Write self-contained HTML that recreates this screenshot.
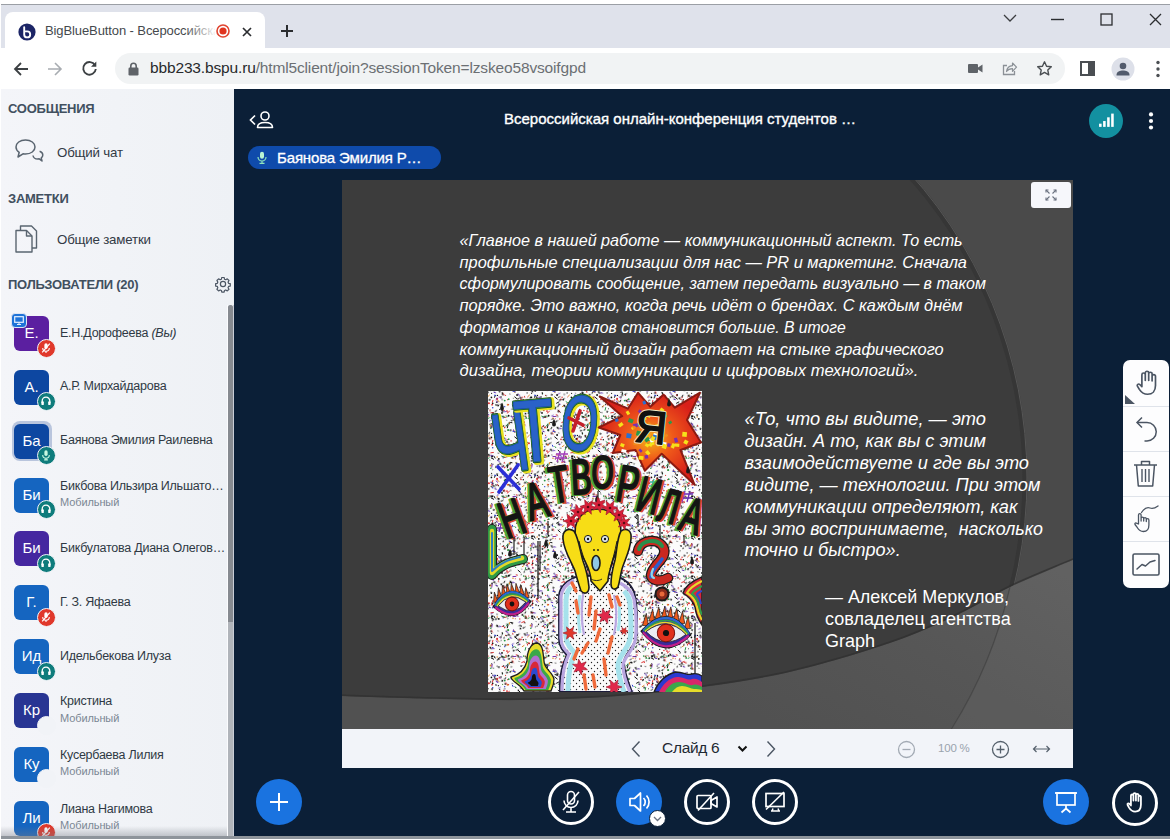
<!DOCTYPE html>
<html lang="ru">
<head>
<meta charset="utf-8">
<title>BigBlueButton - Всероссийская онлайн-конференция студентов</title>
<style>
*{box-sizing:border-box;margin:0;padding:0}
html,body{width:1171px;height:840px;overflow:hidden;background:#fff;font-family:"Liberation Sans",sans-serif;}
.abs{position:absolute}
#frame{position:absolute;left:1px;top:4px;width:1169px;height:834px;background:#dfe2eb;border-top:1px solid #9b9fa5;overflow:hidden}
#bottomline{position:absolute;left:1px;top:835.5px;width:1169px;height:3px;background:#8e949b}
/* chrome */
#tabstrip{position:absolute;left:0;top:0;width:1169px;height:43px;background:#dfe2eb}
#tab{position:absolute;left:4px;top:7px;width:260px;height:36px;background:#fff;border-radius:8px 8px 0 0}
#tabtitle{position:absolute;left:40px;top:11px;width:170px;height:20px;font-size:13px;color:#45494d;white-space:nowrap;overflow:hidden;letter-spacing:-0.1px}
#tabfade{position:absolute;left:180px;top:6px;width:32px;height:24px;background:linear-gradient(90deg,rgba(255,255,255,0),#fff)}
#toolbar{position:absolute;left:0;top:43px;width:1169px;height:41px;background:#fff;z-index:5}
#omni{position:absolute;left:114px;top:5px;width:950px;height:31px;border-radius:16px;background:#f1f3f4}
#url{position:absolute;left:35px;top:6px;font-size:15.5px;color:#6b6f73;white-space:nowrap;letter-spacing:-0.15px}
#url b{font-weight:normal;color:#27292b}
/* app */
#side{position:absolute;left:0;top:83px;width:233px;height:748px;background:linear-gradient(90deg,#f4f5f9 0%,#eef1f5 100%);overflow:hidden}
#main{position:absolute;left:233px;top:83px;width:936px;height:748px;background:#0b1f37}
.h{position:absolute;left:7px;font-size:13px;font-weight:bold;color:#41505f;letter-spacing:-0.25px}
.it{position:absolute;left:56px;font-size:13.3px;color:#323a45;white-space:nowrap;letter-spacing:-0.2px}
.av{position:absolute;left:13px;width:35px;height:35px;border-radius:6px;background:#1565c0;color:#fff;font-size:15px;text-align:center;line-height:33px}
.nm{position:absolute;left:59px;font-size:12.5px;color:#2f3944;white-space:nowrap;letter-spacing:-0.25px}
.sub{position:absolute;left:59px;font-size:11px;color:#7b8794;white-space:nowrap;letter-spacing:-0.1px}
.bd{position:absolute;left:35.8px;width:19px;height:19px;border-radius:50%;border:1.5px solid #f1f3f7}
.bd svg{left:2px !important;top:2px !important;width:12px;height:12px}
</style>
</head>
<body>
<div id="frame">
  <div id="tabstrip">
    <div id="tab">
      <svg class="abs" style="left:13px;top:11px" width="18" height="18" viewBox="0 0 18 18"><circle cx="9" cy="9" r="8.6" fill="#1c2566"/><path d="M6.2 4.2v7.2a3 3 0 1 0 3-3H7.6" fill="none" stroke="#fff" stroke-width="1.9" stroke-linecap="round"/></svg>
      <div id="tabtitle">BigBlueButton - Всероссийская онлайн</div>
      <div id="tabfade"></div>
      <svg class="abs" style="left:211px;top:12px" width="14" height="14" viewBox="0 0 14 14"><circle cx="7" cy="7" r="6" fill="#fff" stroke="#e0442f" stroke-width="1.6"/><circle cx="7" cy="7" r="3.6" fill="#e0341f"/></svg>
      <svg class="abs" style="left:236px;top:14px" width="12" height="12" viewBox="0 0 12 12"><path d="M2 2l8 8M10 2l-8 8" stroke="#2b2d30" stroke-width="1.7"/></svg>
    </div>
    <svg class="abs" style="left:279px;top:19px" width="14" height="14" viewBox="0 0 14 14"><path d="M7 1v12M1 7h12" stroke="#2b2d30" stroke-width="2"/></svg>
    <svg class="abs" style="left:1001px;top:8px" width="16" height="10" viewBox="0 0 16 10"><path d="M2 2l6 6 6-6" fill="none" stroke="#3b3d40" stroke-width="1.3"/></svg>
    <svg class="abs" style="left:1050px;top:13px" width="13" height="3" viewBox="0 0 13 3"><path d="M0 1.5h13" stroke="#2b2d30" stroke-width="1.4"/></svg>
    <svg class="abs" style="left:1099px;top:8px" width="13" height="13" viewBox="0 0 13 13"><rect x="1" y="1" width="11" height="11" fill="none" stroke="#2b2d30" stroke-width="1.3"/></svg>
    <svg class="abs" style="left:1148px;top:8px" width="13" height="13" viewBox="0 0 13 13"><path d="M1 1l11 11M12 1L1 12" stroke="#2b2d30" stroke-width="1.3"/></svg>
  </div>
  <div id="toolbar">
    <svg class="abs" style="left:12px;top:13px" width="16" height="16" viewBox="0 0 16 16"><path d="M15 8H2.5M8 2L2 8l6 6" fill="none" stroke="#3c4043" stroke-width="1.8"/></svg>
    <svg class="abs" style="left:46px;top:13px" width="16" height="16" viewBox="0 0 16 16"><path d="M1 8h12.5M8 2l6 6-6 6" fill="none" stroke="#a8acb1" stroke-width="1.6"/></svg>
    <svg class="abs" style="left:80px;top:12px" width="17" height="17" viewBox="0 0 17 17"><path d="M14 5.2A6.3 6.3 0 1 0 14.8 9" fill="none" stroke="#3c4043" stroke-width="1.9"/><path d="M15.3 1.5v5.3H10z" fill="#3c4043"/></svg>
    <div id="omni">
      <svg class="abs" style="left:13px;top:9px" width="11" height="14" viewBox="0 0 11 14"><rect x="0.5" y="5.5" width="10" height="8" rx="1.2" fill="#5f6368"/><path d="M2.8 6V3.9a2.7 2.7 0 0 1 5.4 0V6" fill="none" stroke="#5f6368" stroke-width="1.6"/></svg>
      <div id="url"><b>bbb233.bspu.ru</b>/html5client/join?sessionToken=lzskeo58vsoifgpd</div>
      <svg class="abs" style="left:853px;top:10px" width="15" height="11" viewBox="0 0 15 11"><rect x="0" y="1" width="10" height="9" rx="1" fill="#5f6368"/><path d="M10 4.5L14.5 1.5v8L10 6.5z" fill="#5f6368"/></svg>
      <svg class="abs" style="left:886px;top:7px" width="17" height="17" viewBox="0 0 17 17"><path d="M6 5.5H2.5v9h11V11" fill="none" stroke="#8b9096" stroke-width="1.3"/><path d="M5.5 11.5c.5-3.5 2.5-5.5 6-5.8V3l4 4.2-4 4.2V8.600c-2.500 0-4.500.8-6 2.900z" fill="none" stroke="#8b9096" stroke-width="1.2" stroke-linejoin="round"/></svg>
      <svg class="abs" style="left:921px;top:7px" width="17" height="17" viewBox="0 0 17 17"><path d="M8.500 1.800l2.050 4.400 4.750.55-3.500 3.300.95 4.750-4.250-2.400-4.250 2.400.95-4.750-3.500-3.300 4.750-.55z" fill="none" stroke="#4a4e52" stroke-width="1.4" stroke-linejoin="round"/></svg>
    </div>
    <svg class="abs" style="left:1079px;top:13px" width="15" height="15" viewBox="0 0 15 15"><rect x="1" y="1" width="13" height="13" fill="none" stroke="#4a4e52" stroke-width="2"/><rect x="8" y="1" width="6" height="13" fill="#4a4e52"/></svg>
    <svg class="abs" style="left:1110px;top:9px" width="24" height="24" viewBox="0 0 24 24"><circle cx="12" cy="12" r="11.500" fill="#dde0e9"/><circle cx="12" cy="9" r="3.300" fill="#525b6c"/><path d="M5.500 17.800c0-3 3.500-4.200 6.500-4.200s6.500 1.200 6.500 4.200v.700h-13z" fill="#525b6c"/></svg>
    <svg class="abs" style="left:1155px;top:12px" width="4" height="18" viewBox="0 0 4 18"><circle cx="2" cy="2.500" r="1.700" fill="#4a4e52"/><circle cx="2" cy="9" r="1.700" fill="#4a4e52"/><circle cx="2" cy="15.500" r="1.700" fill="#4a4e52"/></svg>
  </div>
  <div id="side">
<div class="h" style="top:13px">СООБЩЕНИЯ</div>
<svg class="abs" style="left:13px;top:50px" width="30" height="28" viewBox="0 0 30 28"><path d="M11.500 2C6 2 2 5 2 9c0 2.200 1.200 4 3.200 5.300L4 19l5-3.200c.8.100 1.600.200 2.500.200 5.500 0 9.500-3 9.500-7s-4-7-9.500-7z" fill="none" stroke="#5a6570" stroke-width="1.500" stroke-linejoin="round"/><path d="M19 17.500c.300 2 2.200 3.500 4.800 3.500.5 0 1-.05 1.400-.150L28 23l-.8-3c1-.8 1.600-1.800 1.600-3 0-1.700-1.300-3.100-3.200-3.700" fill="none" stroke="#5a6570" stroke-width="1.500" stroke-linejoin="round"/></svg>
<div class="it" style="top:57px">Общий чат</div>
<div class="h" style="top:102.500px">ЗАМЕТКИ</div>
<svg class="abs" style="left:13px;top:136px" width="26" height="30" viewBox="0 0 26 30"><path d="M6.500 6.500V2h11l5 5v17h-4.500" fill="none" stroke="#5a6570" stroke-width="1.400" stroke-linejoin="round"/><path d="M2 6.500h10.500l5.500 5.500v16H2z" fill="none" stroke="#5a6570" stroke-width="1.400" stroke-linejoin="round"/><path d="M12.500 6.500V12H18" fill="none" stroke="#5a6570" stroke-width="1.400" stroke-linejoin="round"/></svg>
<div class="it" style="top:144px">Общие заметки</div>
<div class="h" style="top:189px">ПОЛЬЗОВАТЕЛИ (20)</div>
<svg class="abs" style="left:213px;top:187px" width="18" height="18" viewBox="0 0 18 18"><path d="M7.600 1.500h2.800l.4 2 1.500.7 1.800-1.100 2 2-1.100 1.800.6 1.500 2 .4v2.800l-2 .4-.6 1.500 1.100 1.800-2 2-1.800-1.100-1.500.6-.4 2H7.600l-.4-2-1.500-.6-1.800 1.100-2-2L3 13.500l-.6-1.500-2-.4V8.800l2-.4L3 6.900 1.900 5.100l2-2 1.800 1.100 1.500-.7z" transform="translate(1.300 1.200) scale(.85)" fill="none" stroke="#4b5563" stroke-width="1.400" stroke-linejoin="round"/><circle cx="9" cy="9" r="2.600" fill="none" stroke="#4b5563" stroke-width="1.200"/></svg>
<div class="abs" style="left:225.500px;top:217px;width:1px;height:531px;background:#fbfcfe"></div><div class="abs" style="left:226.500px;top:217px;width:5px;height:531px;background:#b0b4ba;border-radius:3px 3px 0 0"></div><div class="abs" style="left:231.500px;top:217px;width:1.500px;height:531px;background:#c9cdd6"></div><div class="abs" style="left:226.500px;top:217px;width:5px;height:317px;background:#868a90;border-radius:3px 3px 0 0"></div>
<div class="av" style="top:228.0px;background:#5b1fa0">Е.</div>
<div class="bd" style="top:250.5px;background:#e0382b"><svg class="abs" style="left:1px;top:1px" width="11" height="11" viewBox="0 0 11 11"><rect x="4" y="1.2" width="3" height="5.2" rx="1.500" fill="#fff"/><path d="M2.500 5.500a3 3 0 0 0 6 0M5.500 8.500v1.500" stroke="#fff" stroke-width="1" fill="none"/><path d="M2 9.500L9 1.500" stroke="#fff" stroke-width="1.100"/></svg></div>
<div class="nm" style="top:237.6px">Е.Н.Дорофеева <i>(Вы)</i></div>
<div class="av" style="top:281.87px;background:#0d47a1">А.</div>
<div class="bd" style="top:304.37px;background:#0f7c7c"><svg class="abs" style="left:1px;top:1px" width="11" height="11" viewBox="0 0 11 11"><path d="M2 7.500V5.500a3.500 3.500 0 0 1 7 0v2" stroke="#fff" stroke-width="1.200" fill="none"/><rect x="1.300" y="5.800" width="2.200" height="3.400" rx=".8" fill="#fff"/><rect x="7.500" y="5.800" width="2.200" height="3.400" rx=".8" fill="#fff"/></svg></div>
<div class="nm" style="top:291.47px">А.Р. Мирхайдарова</div>
<div class="abs" style="left:10.500px;top:333.24px;width:40px;height:40px;border-radius:8px;background:#b9c5dd"></div>
<div class="av" style="top:335.74px;background:#0d47a1">Ба</div>
<div class="bd" style="top:358.24px;background:#0f7c7c"><svg class="abs" style="left:1px;top:1px" width="11" height="11" viewBox="0 0 11 11"><rect x="4" y="1.200" width="3" height="5.200" rx="1.500" fill="#c9f7e0"/><path d="M2.500 5.500a3 3 0 0 0 6 0M5.500 8.500v1.500M3.800 10h3.400" stroke="#c9f7e0" stroke-width="1" fill="none"/></svg></div>
<div class="nm" style="top:345.34px">Баянова Эмилия Раилевна</div>
<div class="av" style="top:389.61px;background:#1565c0">Би</div>
<div class="bd" style="top:412.11px;background:#0f7c7c"><svg class="abs" style="left:1px;top:1px" width="11" height="11" viewBox="0 0 11 11"><path d="M2 7.500V5.500a3.500 3.500 0 0 1 7 0v2" stroke="#fff" stroke-width="1.200" fill="none"/><rect x="1.300" y="5.800" width="2.200" height="3.400" rx=".8" fill="#fff"/><rect x="7.500" y="5.800" width="2.200" height="3.400" rx=".8" fill="#fff"/></svg></div>
<div class="nm" style="top:390.61px">Бикбова Ильзира Ильшато…</div>
<div class="sub" style="top:408.11px">Мобильный</div>
<div class="av" style="top:443.48px;background:#4527a0">Би</div>
<div class="bd" style="top:465.98px;background:#0f7c7c"><svg class="abs" style="left:1px;top:1px" width="11" height="11" viewBox="0 0 11 11"><path d="M2 7.500V5.500a3.500 3.500 0 0 1 7 0v2" stroke="#fff" stroke-width="1.200" fill="none"/><rect x="1.300" y="5.800" width="2.200" height="3.400" rx=".8" fill="#fff"/><rect x="7.500" y="5.800" width="2.200" height="3.400" rx=".8" fill="#fff"/></svg></div>
<div class="nm" style="top:453.08px">Бикбулатова Диана Олегов…</div>
<div class="av" style="top:497.35px;background:#1565c0">Г.</div>
<div class="bd" style="top:519.85px;background:#e0382b"><svg class="abs" style="left:1px;top:1px" width="11" height="11" viewBox="0 0 11 11"><rect x="4" y="1.2" width="3" height="5.2" rx="1.500" fill="#fff"/><path d="M2.500 5.500a3 3 0 0 0 6 0M5.500 8.500v1.500" stroke="#fff" stroke-width="1" fill="none"/><path d="M2 9.500L9 1.500" stroke="#fff" stroke-width="1.100"/></svg></div>
<div class="nm" style="top:506.95px">Г. З. Яфаева</div>
<div class="av" style="top:551.22px;background:#1565c0">Ид</div>
<div class="bd" style="top:573.72px;background:#0f7c7c"><svg class="abs" style="left:1px;top:1px" width="11" height="11" viewBox="0 0 11 11"><path d="M2 7.500V5.500a3.500 3.500 0 0 1 7 0v2" stroke="#fff" stroke-width="1.200" fill="none"/><rect x="1.300" y="5.800" width="2.200" height="3.400" rx=".8" fill="#fff"/><rect x="7.500" y="5.800" width="2.200" height="3.400" rx=".8" fill="#fff"/></svg></div>
<div class="nm" style="top:560.82px">Идельбекова Илуза</div>
<div class="av" style="top:605.09px;background:#283593">Кр</div>
<div class="bd" style="top:627.59px;background:#f1f3f7"></div>
<div class="nm" style="top:606.09px">Кристина</div>
<div class="sub" style="top:623.59px">Мобильный</div>
<div class="av" style="top:658.96px;background:#1565c0">Ку</div>
<div class="bd" style="top:681.46px;background:#f1f3f7"></div>
<div class="nm" style="top:659.96px">Кусербаева Лилия</div>
<div class="sub" style="top:677.46px">Мобильный</div>
<div class="av" style="top:712.83px;background:#1565c0">Ли</div>
<div class="bd" style="top:735.33px;background:#e0382b"><svg class="abs" style="left:1px;top:1px" width="11" height="11" viewBox="0 0 11 11"><rect x="4" y="1.2" width="3" height="5.2" rx="1.500" fill="#fff"/><path d="M2.500 5.500a3 3 0 0 0 6 0M5.500 8.500v1.500" stroke="#fff" stroke-width="1" fill="none"/><path d="M2 9.500L9 1.500" stroke="#fff" stroke-width="1.100"/></svg></div>
<div class="nm" style="top:713.83px">Лиана Нагимова</div>
<div class="sub" style="top:731.33px">Мобильный</div>
<div class="abs" style="left:10px;top:225px;width:16px;height:15px;border-radius:4px;background:#1e73d8;border:1.500px solid #dfe6f3"><svg class="abs" style="left:1.500px;top:1.500px" width="10" height="9" viewBox="0 0 10 9"><rect x=".7" y=".7" width="8.600" height="5.600" fill="none" stroke="#e6f0ff" stroke-width="1.200"/><path d="M3 8.500h4M5 6.500v2" stroke="#e6f0ff" stroke-width="1"/></svg></div>
<div class="abs" style="left:0;top:738px;width:226px;height:10px;background:linear-gradient(180deg,rgba(120,125,135,0),rgba(120,125,135,.4))"></div>
</div>
  <div id="main">
<svg class="abs" style="left:14px;top:21px" width="28" height="22" viewBox="0 0 28 22"><path d="M7 6.500L2.500 11 7 15.500" fill="none" stroke="#fff" stroke-width="1.700"/><circle cx="17" cy="7" r="4" fill="none" stroke="#fff" stroke-width="1.600"/><path d="M9.500 18.500c0-3.500 3.500-5 7.500-5s7.500 1.500 7.500 5z" fill="none" stroke="#fff" stroke-width="1.600" stroke-linejoin="round"/></svg>
<div class="abs" id="title" style="left:146px;top:22px;width:600px;text-align:center;color:#fff;font-size:15px;white-space:nowrap;letter-spacing:0px;-webkit-text-stroke:0.35px #fff">Всероссийская онлайн-конференция студентов …</div>
<div class="abs" style="left:855px;top:16px;width:34px;height:34px;border-radius:50%;background:#1390a0"><svg class="abs" style="left:9px;top:7.500px" width="17" height="17" viewBox="0 0 16 16"><rect x="1" y="11" width="2.400" height="3" fill="#fff"/><rect x="4.800" y="8.500" width="2.400" height="5.500" fill="#fff"/><rect x="8.600" y="5" width="2.400" height="9" fill="#fff"/><rect x="12.400" y="1.500" width="2.400" height="12.500" fill="#fff"/></svg></div>
<svg class="abs" style="left:914px;top:23px" width="6" height="20" viewBox="0 0 6 20"><circle cx="3" cy="3.400" r="2.100" fill="#fff"/><circle cx="3" cy="10" r="2.100" fill="#fff"/><circle cx="3" cy="16.500" r="2.100" fill="#fff"/></svg>
<div class="abs" style="left:14px;top:58px;width:193px;height:23px;border-radius:12px;background:#0f4bab"></div>
<svg class="abs" style="left:22px;top:63px" width="12" height="13" viewBox="0 0 12 13"><rect x="4" y=".8" width="4" height="7" rx="2" fill="#b9f5d4"/><path d="M2 6a4 4 0 0 0 8 0M6 10v2M3.500 12.300h5" stroke="#8fe6bd" stroke-width="1.200" fill="none"/></svg>
<div class="abs" style="left:43px;top:61px;color:#fff;font-size:15px;white-space:nowrap;letter-spacing:-0.15px;-webkit-text-stroke:0.3px #fff">Баянова Эмилия Р…</div>
<div id="slide" class="abs" style="left:107px;top:92px;width:732px;height:549px;background:#474747;overflow:hidden"><svg class="abs" style="left:0;top:0" width="732" height="549" viewBox="0 0 732 549">
<defs><linearGradient id="g1" gradientUnits="userSpaceOnUse" x1="700" y1="380" x2="560" y2="620"><stop offset="0" stop-color="#5c5c5c"/><stop offset=".5" stop-color="#565656"/><stop offset="1" stop-color="#515151"/></linearGradient></defs>
<rect width="732" height="549" fill="#4a4a4a"/><circle cx="231" cy="298" r="455" fill="#3c3c3c"/><circle cx="231" cy="298" r="453" fill="none" stroke="#303030" stroke-opacity=".5" stroke-width="5"/><circle cx="231" cy="298" r="455" fill="none" stroke="#565656" stroke-width="1"/><path d="M0 516C26.5 517.2 67.5 518.3 99 519C130.5 519.7 159.0 520.5 189 520C219.0 519.5 250.2 518.2 279 516C307.8 513.8 333.7 511.0 362 507C390.3 503.0 417.8 499.3 449 492C480.2 484.7 521.2 472.5 549 463C576.8 453.5 596.0 444.3 616 435C636.0 425.7 649.7 416.2 669 407C688.3 397.8 710.2 389.2 732 380V549H0z" fill="url(#g1)"/><path d="M0 516C26.5 517.2 67.5 518.3 99 519C130.5 519.7 159.0 520.5 189 520C219.0 519.5 250.2 518.2 279 516C307.8 513.8 333.7 511.0 362 507C390.3 503.0 417.8 499.3 449 492C480.2 484.7 521.2 472.5 549 463C576.8 453.5 596.0 444.3 616 435C636.0 425.7 649.7 416.2 669 407C688.3 397.8 710.2 389.2 732 380" fill="none" stroke="#2f2f2f" stroke-opacity=".7" stroke-width="1.600" transform="translate(0 -1)"/><path d="M669 407A455 455 0 0 1 610.500 549" fill="none" stroke="#464646" stroke-width="1.200"/><path d="M669 407A455 455 0 0 1 610.500 549H732V380z" fill="#fff" fill-opacity=".035"/>
<text x="118.6" y="66.0" font-family="Liberation Sans,sans-serif" font-style="italic" font-size="16.500" fill="#fff" textLength="503.0" lengthAdjust="spacingAndGlyphs">«Главное в нашей работе — коммуникационный аспект. То есть</text>
<text x="118.6" y="87.7" font-family="Liberation Sans,sans-serif" font-style="italic" font-size="16.500" fill="#fff" textLength="507.4" lengthAdjust="spacingAndGlyphs">профильные специализации для нас — PR и маркетинг. Сначала</text>
<text x="118.6" y="109.4" font-family="Liberation Sans,sans-serif" font-style="italic" font-size="16.500" fill="#fff" textLength="526.4" lengthAdjust="spacingAndGlyphs">сформулировать сообщение, затем передать визуально — в таком</text>
<text x="118.6" y="131.1" font-family="Liberation Sans,sans-serif" font-style="italic" font-size="16.500" fill="#fff" textLength="503.0" lengthAdjust="spacingAndGlyphs">порядке. Это важно, когда речь идёт о брендах. С каждым днём</text>
<text x="118.6" y="152.8" font-family="Liberation Sans,sans-serif" font-style="italic" font-size="16.500" fill="#fff" textLength="386.1" lengthAdjust="spacingAndGlyphs">форматов и каналов становится больше. В итоге</text>
<text x="118.6" y="174.5" font-family="Liberation Sans,sans-serif" font-style="italic" font-size="16.500" fill="#fff" textLength="484.1" lengthAdjust="spacingAndGlyphs">коммуникационный дизайн работает на стыке графического</text>
<text x="118.6" y="196.2" font-family="Liberation Sans,sans-serif" font-style="italic" font-size="16.500" fill="#fff" textLength="458.8" lengthAdjust="spacingAndGlyphs">дизайна, теории коммуникации и цифровых технологий».</text>
<text x="403.5" y="245.0" xml:space="preserve" font-family="Liberation Sans,sans-serif" font-style="italic" font-size="18.500" fill="#fff" textLength="241.5" lengthAdjust="spacingAndGlyphs">«То, что вы видите, — это</text>
<text x="403.5" y="266.9" xml:space="preserve" font-family="Liberation Sans,sans-serif" font-style="italic" font-size="18.500" fill="#fff" textLength="241.5" lengthAdjust="spacingAndGlyphs">дизайн. А то, как вы с этим</text>
<text x="403.5" y="288.8" xml:space="preserve" font-family="Liberation Sans,sans-serif" font-style="italic" font-size="18.500" fill="#fff" textLength="284.5" lengthAdjust="spacingAndGlyphs">взаимодействуете и где вы это</text>
<text x="403.5" y="310.7" xml:space="preserve" font-family="Liberation Sans,sans-serif" font-style="italic" font-size="18.500" fill="#fff" textLength="295.9" lengthAdjust="spacingAndGlyphs">видите, — технологии. При этом</text>
<text x="403.5" y="332.6" xml:space="preserve" font-family="Liberation Sans,sans-serif" font-style="italic" font-size="18.500" fill="#fff" textLength="273.1" lengthAdjust="spacingAndGlyphs">коммуникации определяют, как</text>
<text x="403.5" y="354.5" xml:space="preserve" font-family="Liberation Sans,sans-serif" font-style="italic" font-size="18.500" fill="#fff" textLength="298.5" lengthAdjust="spacingAndGlyphs">вы это воспринимаете,  насколько</text>
<text x="403.5" y="376.4" xml:space="preserve" font-family="Liberation Sans,sans-serif" font-style="italic" font-size="18.500" fill="#fff" textLength="156.2" lengthAdjust="spacingAndGlyphs">точно и быстро».</text>
<text x="484" y="422.5" font-family="Liberation Sans,sans-serif" font-size="18.500" fill="#fff" textLength="184" lengthAdjust="spacingAndGlyphs">— Алексей Меркулов,</text>
<text x="484" y="445" font-family="Liberation Sans,sans-serif" font-size="18.500" fill="#fff" textLength="185.7" lengthAdjust="spacingAndGlyphs">совладелец агентства</text>
<text x="484" y="467" font-family="Liberation Sans,sans-serif" font-size="18.500" fill="#fff" textLength="50" lengthAdjust="spacingAndGlyphs">Graph</text>
</svg>
<div id="art" class="abs" style="left:147px;top:211px;width:214px;height:301px;background:#fdfdfd;overflow:hidden"><svg class="abs" style="left:0;top:0" width="214" height="301" viewBox="0 0 214 301">
<defs><pattern id="spk" width="40" height="40" patternUnits="userSpaceOnUse"><circle cx="13.0" cy="6.0" r="0.82" fill="#111"/><circle cx="14.6" cy="2.3" r="0.59" fill="#2a9a4a"/><circle cx="16.7" cy="9.6" r="0.96" fill="#2a9a4a"/><path d="M5.0 8.9l-0.7 2.7" stroke="#d33" stroke-width="1"/><circle cx="39.1" cy="1.9" r="0.62" fill="#111"/><circle cx="4.7" cy="12.3" r="0.84" fill="#111"/><path d="M7.5 3.9l-1.1 2.8" stroke="#111" stroke-width="1"/><path d="M21.3 31.1l0.4 2.5" stroke="#e08a2a" stroke-width="1"/><circle cx="31.8" cy="28.0" r="0.70" fill="#d33"/><circle cx="19.8" cy="13.7" r="1.04" fill="#e08a2a"/><circle cx="4.7" cy="16.7" r="0.79" fill="#2a3fd0"/><path d="M1.6 26.7l-2.4 1.0" stroke="#2a9a4a" stroke-width="1"/><path d="M27.8 23.8l2.0 0.4" stroke="#d33" stroke-width="1"/><circle cx="10.8" cy="27.9" r="0.90" fill="#111"/><circle cx="25.9" cy="39.7" r="0.74" fill="#e08a2a"/><circle cx="26.7" cy="0.9" r="0.86" fill="#e08a2a"/><circle cx="19.7" cy="8.7" r="0.67" fill="#d33"/><circle cx="15.6" cy="34.9" r="0.75" fill="#111"/><path d="M11.1 5.5l1.8 2.1" stroke="#7a2fb0" stroke-width="1"/><circle cx="14.4" cy="35.4" r="0.64" fill="#d33"/><path d="M9.3 9.3l2.1 1.3" stroke="#e08a2a" stroke-width="1"/><path d="M5.8 21.4l-3.4 0.5" stroke="#d33" stroke-width="1"/><circle cx="20.6" cy="24.7" r="0.99" fill="#111"/><circle cx="38.1" cy="27.2" r="0.75" fill="#2a9a4a"/><circle cx="4.1" cy="25.4" r="1.04" fill="#111"/><circle cx="17.6" cy="4.4" r="0.55" fill="#d33"/><path d="M6.1 4.1l2.2 0.5" stroke="#2a3fd0" stroke-width="1"/><path d="M15.0 25.4l0.2 2.1" stroke="#2a3fd0" stroke-width="1"/><circle cx="19.5" cy="39.1" r="0.59" fill="#e08a2a"/><circle cx="4.1" cy="13.7" r="0.90" fill="#d33"/><circle cx="20.7" cy="8.2" r="0.90" fill="#2a9a4a"/><path d="M36.6 30.3l-3.2 1.4" stroke="#d33" stroke-width="1"/><circle cx="10.4" cy="14.7" r="0.66" fill="#111"/><path d="M21.7 20.1l-2.8 2.2" stroke="#d33" stroke-width="1"/><path d="M7.8 9.6l2.3 2.0" stroke="#7a2fb0" stroke-width="1"/><path d="M14.2 1.2l0.2 2.3" stroke="#111" stroke-width="1"/><path d="M24.2 13.8l1.0 2.1" stroke="#2a3fd0" stroke-width="1"/><circle cx="9.1" cy="7.9" r="1.04" fill="#d33"/><path d="M24.4 0.1l3.3 0.9" stroke="#2a3fd0" stroke-width="1"/><circle cx="36.4" cy="31.3" r="0.64" fill="#d33"/><circle cx="31.6" cy="13.3" r="0.92" fill="#7a2fb0"/><circle cx="3.4" cy="6.4" r="0.85" fill="#111"/><path d="M18.6 26.2l-3.4 0.2" stroke="#d33" stroke-width="1"/><circle cx="14.0" cy="21.9" r="0.95" fill="#111"/><circle cx="29.1" cy="4.1" r="0.99" fill="#111"/><circle cx="33.0" cy="8.4" r="0.80" fill="#d33"/><circle cx="30.5" cy="13.0" r="0.62" fill="#2a9a4a"/><path d="M36.4 14.2l-2.5 1.7" stroke="#e08a2a" stroke-width="1"/><circle cx="33.1" cy="35.1" r="0.81" fill="#111"/><path d="M0.7 17.6l-1.6 1.4" stroke="#111" stroke-width="1"/><path d="M5.7 24.8l1.6 2.6" stroke="#111" stroke-width="1"/><path d="M22.2 31.4l2.2 0.4" stroke="#111" stroke-width="1"/><path d="M1.7 3.9l-2.9 2.7" stroke="#e08a2a" stroke-width="1"/><path d="M17.7 24.5l2.0 1.4" stroke="#2a9a4a" stroke-width="1"/><path d="M20.3 32.3l-2.3 3.2" stroke="#2a9a4a" stroke-width="1"/><path d="M37.7 10.4l2.3 1.7" stroke="#2a9a4a" stroke-width="1"/><circle cx="16.7" cy="15.7" r="0.67" fill="#2a3fd0"/><path d="M2.9 26.8l3.1 1.6" stroke="#111" stroke-width="1"/><path d="M26.4 5.7l3.2 2.6" stroke="#111" stroke-width="1"/><circle cx="15.9" cy="19.5" r="0.77" fill="#d33"/><circle cx="20.6" cy="13.6" r="0.60" fill="#d33"/><circle cx="14.6" cy="13.5" r="0.56" fill="#e08a2a"/><path d="M13.3 25.0l3.8 1.4" stroke="#2a9a4a" stroke-width="1"/><circle cx="9.1" cy="35.1" r="0.57" fill="#111"/><path d="M31.2 10.8l-3.0 1.6" stroke="#111" stroke-width="1"/><path d="M37.8 16.2l-0.8 3.4" stroke="#2a9a4a" stroke-width="1"/><circle cx="3.6" cy="2.3" r="0.59" fill="#111"/><circle cx="37.5" cy="25.4" r="0.98" fill="#d33"/><circle cx="2.7" cy="34.5" r="1.05" fill="#e08a2a"/><circle cx="16.7" cy="36.6" r="0.81" fill="#d33"/><circle cx="9.5" cy="4.4" r="0.64" fill="#111"/><path d="M37.3 25.1l1.8 2.4" stroke="#2a9a4a" stroke-width="1"/><path d="M7.1 13.9l1.8 0.2" stroke="#111" stroke-width="1"/><circle cx="20.2" cy="39.1" r="1.02" fill="#2a9a4a"/><path d="M4.3 32.8l-0.6 3.9" stroke="#7a2fb0" stroke-width="1"/><path d="M38.8 12.3l1.8 3.3" stroke="#d33" stroke-width="1"/><path d="M28.3 25.4l-3.8 0.2" stroke="#7a2fb0" stroke-width="1"/><circle cx="0.6" cy="25.0" r="0.58" fill="#d33"/><path d="M26.6 15.2l1.5 1.8" stroke="#2a9a4a" stroke-width="1"/><circle cx="11.7" cy="18.4" r="0.55" fill="#111"/><circle cx="14.6" cy="13.2" r="0.57" fill="#2a9a4a"/><circle cx="35.3" cy="8.7" r="0.74" fill="#111"/><circle cx="19.0" cy="20.1" r="0.94" fill="#d33"/><circle cx="3.6" cy="32.7" r="0.57" fill="#111"/><circle cx="0.9" cy="12.2" r="1.03" fill="#d33"/><circle cx="34.1" cy="6.2" r="0.71" fill="#d33"/><path d="M39.4 6.0l3.8 0.5" stroke="#d33" stroke-width="1"/><circle cx="35.7" cy="25.1" r="0.81" fill="#2a9a4a"/><path d="M20.2 33.4l-1.0 3.8" stroke="#111" stroke-width="1"/><circle cx="27.3" cy="27.7" r="0.57" fill="#d33"/><path d="M25.5 38.4l-0.6 3.3" stroke="#7a2fb0" stroke-width="1"/><circle cx="25.0" cy="27.2" r="0.78" fill="#e08a2a"/><circle cx="2.8" cy="37.3" r="0.81" fill="#2a9a4a"/><path d="M29.8 19.0l2.7 2.4" stroke="#111" stroke-width="1"/><circle cx="9.2" cy="26.0" r="0.74" fill="#e08a2a"/></pattern>
<pattern id="spk2" width="29" height="23" patternUnits="userSpaceOnUse" patternTransform="rotate(17)"><path d="M13.9 15.7l-1.0 2.6" stroke="#151515" stroke-width="1"/><path d="M17.4 7.6l-1.6 2.3" stroke="#151515" stroke-width="1"/><circle cx="0.4" cy="1.4" r="0.80" fill="#151515"/><circle cx="20.1" cy="15.5" r="0.73" fill="#151515"/><circle cx="13.5" cy="10.7" r="0.90" fill="#151515"/><path d="M5.8 22.5l2.4 0.1" stroke="#5a2fb0" stroke-width="1"/><circle cx="28.1" cy="10.3" r="0.59" fill="#151515"/><circle cx="27.4" cy="4.8" r="0.56" fill="#151515"/><circle cx="15.2" cy="21.9" r="0.87" fill="#151515"/><path d="M14.8 20.4l2.5 2.2" stroke="#c33" stroke-width="1"/><path d="M11.4 3.7l-1.2 1.9" stroke="#5a2fb0" stroke-width="1"/><circle cx="4.1" cy="7.9" r="0.88" fill="#151515"/><path d="M0.1 17.3l3.1 1.2" stroke="#5a2fb0" stroke-width="1"/><circle cx="0.3" cy="17.0" r="0.53" fill="#151515"/><circle cx="11.3" cy="20.0" r="0.92" fill="#151515"/><circle cx="21.9" cy="19.6" r="0.52" fill="#151515"/><circle cx="19.2" cy="14.6" r="0.94" fill="#151515"/><path d="M12.7 7.3l-1.8 1.5" stroke="#151515" stroke-width="1"/><path d="M23.5 14.5l-2.6 0.5" stroke="#5a2fb0" stroke-width="1"/><circle cx="2.3" cy="21.5" r="0.78" fill="#151515"/><circle cx="4.0" cy="20.0" r="0.91" fill="#151515"/><circle cx="16.0" cy="3.9" r="0.63" fill="#151515"/><path d="M7.4 17.0l0.6 1.9" stroke="#c33" stroke-width="1"/><circle cx="16.2" cy="9.1" r="0.57" fill="#151515"/><circle cx="6.0" cy="20.8" r="0.60" fill="#151515"/><circle cx="26.3" cy="22.9" r="0.56" fill="#151515"/></pattern>
<pattern id="dots" width="6" height="6" patternUnits="userSpaceOnUse"><circle cx="1.500" cy="1.500" r=".7" fill="#222"/><circle cx="4.500" cy="4.500" r=".7" fill="#222"/></pattern>
<radialGradient id="burst"><stop offset="0" stop-color="#f6b21a"/><stop offset=".45" stop-color="#ef5a1a"/><stop offset="1" stop-color="#d8201a"/></radialGradient>
</defs>
<rect width="214" height="301" fill="#fbfbfb"/>
<rect width="214" height="301" fill="url(#spk)"/>
<rect width="214" height="301" fill="url(#spk2)"/>
<text x="0" y="0" transform="translate(28 81) rotate(-8) scale(0.64 1)" font-family="Liberation Sans,sans-serif" font-size="84" fill="#e8e11f" stroke="#e8e11f" stroke-width="5.5" stroke-linejoin="round" text-anchor="middle">Ч</text>
<text x="0" y="0" transform="translate(26 80) rotate(-8) scale(0.64 1)" font-family="Liberation Sans,sans-serif" font-size="84" fill="#1f7a38" stroke="#14401f" stroke-width="3.8" stroke-linejoin="round" text-anchor="middle">Ч</text>
<text x="0" y="0" transform="translate(26 80) rotate(-8) scale(0.64 1)" font-family="Liberation Sans,sans-serif" font-size="84" fill="#1c4fc4" stroke="#2c8a44" stroke-width="2.6" stroke-linejoin="round" text-anchor="middle">Ч</text>
<text x="0" y="0" transform="translate(26 80) rotate(-8) scale(0.64 1)" font-family="Liberation Sans,sans-serif" font-size="84" fill="#1c4fc4" stroke="#1c3fb4" stroke-width="1" stroke-linejoin="round" text-anchor="middle">Ч</text>
<text x="0" y="0" transform="translate(26 80) rotate(-8) scale(0.64 1)" font-family="Liberation Sans,sans-serif" font-size="84" fill="#2a62c8" stroke="none" stroke-width="0" stroke-linejoin="round" text-anchor="middle">Ч</text>
<text x="0" y="0" transform="translate(51 71) rotate(-5) scale(0.74 1)" font-family="Liberation Sans,sans-serif" font-size="88" fill="#e8e11f" stroke="#e8e11f" stroke-width="5.5" stroke-linejoin="round" text-anchor="middle">Т</text>
<text x="0" y="0" transform="translate(49 70) rotate(-5) scale(0.74 1)" font-family="Liberation Sans,sans-serif" font-size="88" fill="#1f7a38" stroke="#14401f" stroke-width="3.8" stroke-linejoin="round" text-anchor="middle">Т</text>
<text x="0" y="0" transform="translate(49 70) rotate(-5) scale(0.74 1)" font-family="Liberation Sans,sans-serif" font-size="88" fill="#1c4fc4" stroke="#2c8a44" stroke-width="2.6" stroke-linejoin="round" text-anchor="middle">Т</text>
<text x="0" y="0" transform="translate(49 70) rotate(-5) scale(0.74 1)" font-family="Liberation Sans,sans-serif" font-size="88" fill="#1c4fc4" stroke="#1c3fb4" stroke-width="1" stroke-linejoin="round" text-anchor="middle">Т</text>
<text x="0" y="0" transform="translate(49 70) rotate(-5) scale(0.74 1)" font-family="Liberation Sans,sans-serif" font-size="88" fill="#2a62c8" stroke="none" stroke-width="0" stroke-linejoin="round" text-anchor="middle">Т</text>
<text x="0" y="0" transform="translate(91 60) rotate(6) scale(0.6 1)" font-family="Liberation Sans,sans-serif" font-size="78" fill="#e8e11f" stroke="#e8e11f" stroke-width="5.5" stroke-linejoin="round" text-anchor="middle">О</text>
<text x="0" y="0" transform="translate(89 59) rotate(6) scale(0.6 1)" font-family="Liberation Sans,sans-serif" font-size="78" fill="#1f7a38" stroke="#14401f" stroke-width="3.8" stroke-linejoin="round" text-anchor="middle">О</text>
<text x="0" y="0" transform="translate(89 59) rotate(6) scale(0.6 1)" font-family="Liberation Sans,sans-serif" font-size="78" fill="#1c4fc4" stroke="#2c8a44" stroke-width="2.6" stroke-linejoin="round" text-anchor="middle">О</text>
<text x="0" y="0" transform="translate(89 59) rotate(6) scale(0.6 1)" font-family="Liberation Sans,sans-serif" font-size="78" fill="#1c4fc4" stroke="#1c3fb4" stroke-width="1" stroke-linejoin="round" text-anchor="middle">О</text>
<text x="0" y="0" transform="translate(89 59) rotate(6) scale(0.6 1)" font-family="Liberation Sans,sans-serif" font-size="78" fill="#2a62c8" stroke="none" stroke-width="0" stroke-linejoin="round" text-anchor="middle">О</text>
<path d="M81 27l14 7M92 20l-7 20" stroke="#c4202a" stroke-width="3.600" stroke-linecap="round"/>
<path d="M10 76l21 22M30 74L11 101" stroke="#2b2fd6" stroke-width="3.600" stroke-linecap="round"/>
<path d="M72 60l-3 11M77 60l-3 11M68 63h12M67 67h12" stroke="#a23bb8" stroke-width="1.300"/>
<path d="M14 130l-3 11M19 130l-3 11M10 133h12M9 137h12" stroke="#6a2fb5" stroke-width="1.300"/>
<path d="M166 88l-3 11M171 88l-3 11M162 91h12M161 95h12" stroke="#3ab8a0" stroke-width="1.300"/>
<path d="M197 100l-3 11M202 100l-3 11M193 103h12M192 107h12" stroke="#6a2fb5" stroke-width="1.300"/>
<polygon points="111.7,5.5 139.9,17.7 150,1.7 162.4,15.8 175.6,3.6 186.8,16.7 212,1.7 199,29 213,51.5 192.5,59 206.6,93.8 173.7,62.8 156.8,79.7 147.4,59 124.8,61.9 132.3,44 110.7,36.5 134.2,25.2" fill="url(#burst)" stroke="#8c1a12" stroke-width="2" stroke-linejoin="round"/>
<rect x="163.6" y="45.7" width="3.9" height="3.3" fill="#7a2fb0" transform="rotate(47 163.6 45.7)"/>
<rect x="159.8" y="59.0" width="4.4" height="3.5" fill="#f6e11a" transform="rotate(52 159.8 59.0)"/>
<rect x="160.7" y="30.7" width="3.3" height="2.7" fill="#f08a1a" transform="rotate(35 160.7 30.7)"/>
<rect x="146.5" y="34.0" width="2.7" height="4.7" fill="#f6e11a" transform="rotate(49 146.5 34.0)"/>
<rect x="145.6" y="49.2" width="4.6" height="4.7" fill="#f08a1a" transform="rotate(2 145.6 49.2)"/>
<rect x="173.8" y="50.8" width="4.9" height="3.7" fill="#fff" transform="rotate(9 173.8 50.8)"/>
<rect x="133.8" y="58.0" width="4.9" height="3.1" fill="#fff" transform="rotate(13 133.8 58.0)"/>
<rect x="162.5" y="47.6" width="4.9" height="4.3" fill="#2a9a4a" transform="rotate(58 162.5 47.6)"/>
<rect x="186.9" y="52.5" width="4.5" height="3.1" fill="#f6e11a" transform="rotate(4 186.9 52.5)"/>
<rect x="152.2" y="30.7" width="4.1" height="3.8" fill="#2a6fd0" transform="rotate(55 152.2 30.7)"/>
<rect x="158.4" y="33.7" width="3.3" height="4.9" fill="#2a9a4a" transform="rotate(24 158.4 33.7)"/>
<rect x="152.0" y="46.2" width="2.5" height="3.3" fill="#f6e11a" transform="rotate(58 152.0 46.2)"/>
<rect x="158.3" y="51.9" width="3.7" height="3.1" fill="#f6e11a" transform="rotate(31 158.3 51.9)"/>
<rect x="178.7" y="42.7" width="2.6" height="3.0" fill="#f08a1a" transform="rotate(53 178.7 42.7)"/>
<rect x="171.4" y="44.8" width="4.8" height="3.1" fill="#f6e11a" transform="rotate(4 171.4 44.8)"/>
<rect x="151.6" y="18.3" width="4.2" height="3.0" fill="#7a2fb0" transform="rotate(37 151.6 18.3)"/>
<rect x="159.6" y="22.8" width="3.7" height="3.0" fill="#f6e11a" transform="rotate(24 159.6 22.8)"/>
<rect x="162.4" y="49.5" width="2.8" height="4.1" fill="#f08a1a" transform="rotate(78 162.4 49.5)"/>
<rect x="165.5" y="48.9" width="4.8" height="2.6" fill="#f6e11a" transform="rotate(76 165.5 48.9)"/>
<rect x="171.5" y="51.3" width="2.6" height="4.0" fill="#f6e11a" transform="rotate(53 171.5 51.3)"/>
<rect x="167.0" y="41.7" width="3.6" height="4.3" fill="#f6e11a" transform="rotate(40 167.0 41.7)"/>
<rect x="157.0" y="9.6" width="3.3" height="3.0" fill="#2a6fd0" transform="rotate(67 157.0 9.6)"/>
<rect x="160.9" y="35.5" width="4.6" height="5.0" fill="#f6e11a" transform="rotate(56 160.9 35.5)"/>
<rect x="163.2" y="43.2" width="2.7" height="3.6" fill="#f08a1a" transform="rotate(15 163.2 43.2)"/>
<rect x="133.7" y="31.0" width="3.4" height="4.6" fill="#f6e11a" transform="rotate(55 133.7 31.0)"/>
<rect x="184.6" y="51.9" width="3.4" height="4.8" fill="#f6e11a" transform="rotate(24 184.6 51.9)"/>
<rect x="148.2" y="61.1" width="2.6" height="3.5" fill="#fff" transform="rotate(80 148.2 61.1)"/>
<rect x="161.6" y="35.3" width="3.7" height="4.5" fill="#f6e11a" transform="rotate(7 161.6 35.3)"/>
<rect x="159.7" y="63.8" width="3.4" height="3.3" fill="#7a2fb0" transform="rotate(78 159.7 63.8)"/>
<rect x="189.0" y="46.4" width="4.8" height="3.2" fill="#7a2fb0" transform="rotate(76 189.0 46.4)"/>
<rect x="182.9" y="29.6" width="2.6" height="3.1" fill="#2a9a4a" transform="rotate(60 182.9 29.6)"/>
<rect x="156.8" y="24.2" width="4.5" height="4.8" fill="#f6e11a" transform="rotate(63 156.8 24.2)"/>
<rect x="175.0" y="52.6" width="4.5" height="4.3" fill="#f6e11a" transform="rotate(19 175.0 52.6)"/>
<rect x="149.1" y="32.2" width="3.7" height="4.5" fill="#7a2fb0" transform="rotate(76 149.1 32.2)"/>
<rect x="170.6" y="44.3" width="3.1" height="2.7" fill="#2a6fd0" transform="rotate(4 170.6 44.3)"/>
<rect x="138.8" y="42.1" width="5.0" height="4.7" fill="#2a6fd0" transform="rotate(9 138.8 42.1)"/>
<rect x="160.3" y="45.8" width="3.6" height="5.0" fill="#2a9a4a" transform="rotate(57 160.3 45.8)"/>
<rect x="165.1" y="46.4" width="4.1" height="4.2" fill="#fff" transform="rotate(68 165.1 46.4)"/>
<rect x="176.1" y="22.3" width="4.4" height="3.2" fill="#2a9a4a" transform="rotate(35 176.1 22.3)"/>
<rect x="145.7" y="34.4" width="3.0" height="3.1" fill="#f08a1a" transform="rotate(31 145.7 34.4)"/>
<rect x="162.2" y="51.2" width="3.3" height="3.5" fill="#f6e11a" transform="rotate(31 162.2 51.2)"/>
<rect x="149.0" y="39.5" width="4.1" height="5.0" fill="#2a9a4a" transform="rotate(13 149.0 39.5)"/>
<rect x="194.5" y="40.8" width="4.6" height="4.8" fill="#f6e11a" transform="rotate(5 194.5 40.8)"/>
<rect x="169.6" y="33.1" width="3.0" height="4.9" fill="#f6e11a" transform="rotate(74 169.6 33.1)"/>
<rect x="163.4" y="45.3" width="3.6" height="3.1" fill="#2a6fd0" transform="rotate(0 163.4 45.3)"/>
<rect x="179.9" y="52.1" width="3.0" height="3.4" fill="#7a2fb0" transform="rotate(18 179.9 52.1)"/>
<rect x="197.0" y="48.4" width="4.0" height="4.1" fill="#f6e11a" transform="rotate(26 197.0 48.4)"/>
<rect x="173.4" y="16.4" width="4.2" height="3.0" fill="#f6e11a" transform="rotate(39 173.4 16.4)"/>
<rect x="165.8" y="42.1" width="3.9" height="2.7" fill="#fff" transform="rotate(12 165.8 42.1)"/>
<rect x="168.5" y="19.4" width="4.1" height="2.7" fill="#2a6fd0" transform="rotate(20 168.5 19.4)"/>
<rect x="150.3" y="46.5" width="4.2" height="3.5" fill="#f08a1a" transform="rotate(6 150.3 46.5)"/>
<rect x="152.2" y="57.5" width="3.5" height="2.5" fill="#7a2fb0" transform="rotate(46 152.2 57.5)"/>
<rect x="150.4" y="28.8" width="3.0" height="2.5" fill="#f6e11a" transform="rotate(20 150.4 28.8)"/>
<rect x="133.1" y="51.9" width="3.9" height="3.4" fill="#f6e11a" transform="rotate(20 133.1 51.9)"/>
<rect x="165.2" y="43.6" width="4.1" height="4.8" fill="#2a6fd0" transform="rotate(11 165.2 43.6)"/>
<rect x="129.6" y="27.3" width="2.9" height="3.2" fill="#2a6fd0" transform="rotate(66 129.6 27.3)"/>
<rect x="164.1" y="44.8" width="3.7" height="4.5" fill="#f6e11a" transform="rotate(25 164.1 44.8)"/>
<rect x="150.8" y="64.8" width="4.9" height="3.7" fill="#f6e11a" transform="rotate(6 150.8 64.8)"/>
<rect x="141.2" y="27.0" width="4.8" height="4.1" fill="#2a9a4a" transform="rotate(20 141.2 27.0)"/>
<rect x="140.2" y="19.4" width="4.0" height="3.0" fill="#f6e11a" transform="rotate(60 140.2 19.4)"/>
<text x="0" y="0" transform="translate(161.5 52) rotate(6) scale(.95 1)" font-family="Liberation Sans,sans-serif" font-size="46" fill="#f4e8c0" stroke="#f4e8c0" stroke-width="3.5" stroke-linejoin="round" text-anchor="middle">Я</text>
<text x="0" y="0" transform="translate(161.5 52) rotate(6) scale(.95 1)" font-family="Liberation Sans,sans-serif" font-size="46" fill="#111" stroke="#111" stroke-width="1.6" stroke-linejoin="round" text-anchor="middle">Я</text>
<text x="0" y="0" transform="translate(32.4 144.8) rotate(-20) scale(.62 1)" font-family="Liberation Sans,sans-serif" font-size="52" fill="#d8452a" stroke="#d8452a" stroke-width="2" stroke-linejoin="round" text-anchor="middle">Н</text>
<text x="0" y="0" transform="translate(27.8 144.6) rotate(-20) scale(.62 1)" font-family="Liberation Sans,sans-serif" font-size="52" fill="#4aa83a" stroke="#4aa83a" stroke-width="2" stroke-linejoin="round" text-anchor="middle">Н</text>
<text x="0" y="0" transform="translate(55.4 127.8) rotate(-15) scale(.62 1)" font-family="Liberation Sans,sans-serif" font-size="52" fill="#d8452a" stroke="#d8452a" stroke-width="2" stroke-linejoin="round" text-anchor="middle">А</text>
<text x="0" y="0" transform="translate(50.8 127.6) rotate(-15) scale(.62 1)" font-family="Liberation Sans,sans-serif" font-size="52" fill="#4aa83a" stroke="#4aa83a" stroke-width="2" stroke-linejoin="round" text-anchor="middle">А</text>
<text x="0" y="0" transform="translate(76.4 111.8) rotate(-9) scale(.62 1)" font-family="Liberation Sans,sans-serif" font-size="52" fill="#d8452a" stroke="#d8452a" stroke-width="2" stroke-linejoin="round" text-anchor="middle">Т</text>
<text x="0" y="0" transform="translate(71.8 111.6) rotate(-9) scale(.62 1)" font-family="Liberation Sans,sans-serif" font-size="52" fill="#4aa83a" stroke="#4aa83a" stroke-width="2" stroke-linejoin="round" text-anchor="middle">Т</text>
<text x="0" y="0" transform="translate(96.4 103.8) rotate(-3) scale(.62 1)" font-family="Liberation Sans,sans-serif" font-size="50" fill="#d8452a" stroke="#d8452a" stroke-width="2" stroke-linejoin="round" text-anchor="middle">В</text>
<text x="0" y="0" transform="translate(91.8 103.6) rotate(-3) scale(.62 1)" font-family="Liberation Sans,sans-serif" font-size="50" fill="#4aa83a" stroke="#4aa83a" stroke-width="2" stroke-linejoin="round" text-anchor="middle">В</text>
<text x="0" y="0" transform="translate(116.4 97.8) rotate(2) scale(.62 1)" font-family="Liberation Sans,sans-serif" font-size="46" fill="#d8452a" stroke="#d8452a" stroke-width="2" stroke-linejoin="round" text-anchor="middle">О</text>
<text x="0" y="0" transform="translate(111.8 97.6) rotate(2) scale(.62 1)" font-family="Liberation Sans,sans-serif" font-size="46" fill="#4aa83a" stroke="#4aa83a" stroke-width="2" stroke-linejoin="round" text-anchor="middle">О</text>
<text x="0" y="0" transform="translate(139.4 111.8) rotate(10) scale(.62 1)" font-family="Liberation Sans,sans-serif" font-size="52" fill="#d8452a" stroke="#d8452a" stroke-width="2" stroke-linejoin="round" text-anchor="middle">Р</text>
<text x="0" y="0" transform="translate(134.8 111.6) rotate(10) scale(.62 1)" font-family="Liberation Sans,sans-serif" font-size="52" fill="#4aa83a" stroke="#4aa83a" stroke-width="2" stroke-linejoin="round" text-anchor="middle">Р</text>
<text x="0" y="0" transform="translate(159.4 121.8) rotate(14) scale(.62 1)" font-family="Liberation Sans,sans-serif" font-size="50" fill="#d8452a" stroke="#d8452a" stroke-width="2" stroke-linejoin="round" text-anchor="middle">И</text>
<text x="0" y="0" transform="translate(154.8 121.6) rotate(14) scale(.62 1)" font-family="Liberation Sans,sans-serif" font-size="50" fill="#4aa83a" stroke="#4aa83a" stroke-width="2" stroke-linejoin="round" text-anchor="middle">И</text>
<text x="0" y="0" transform="translate(179.4 131.8) rotate(16) scale(.62 1)" font-family="Liberation Sans,sans-serif" font-size="48" fill="#d8452a" stroke="#d8452a" stroke-width="2" stroke-linejoin="round" text-anchor="middle">Л</text>
<text x="0" y="0" transform="translate(174.8 131.6) rotate(16) scale(.62 1)" font-family="Liberation Sans,sans-serif" font-size="48" fill="#4aa83a" stroke="#4aa83a" stroke-width="2" stroke-linejoin="round" text-anchor="middle">Л</text>
<text x="0" y="0" transform="translate(201.4 141.8) rotate(18) scale(.62 1)" font-family="Liberation Sans,sans-serif" font-size="50" fill="#d8452a" stroke="#d8452a" stroke-width="2" stroke-linejoin="round" text-anchor="middle">А</text>
<text x="0" y="0" transform="translate(196.8 141.6) rotate(18) scale(.62 1)" font-family="Liberation Sans,sans-serif" font-size="50" fill="#4aa83a" stroke="#4aa83a" stroke-width="2" stroke-linejoin="round" text-anchor="middle">А</text>
<text x="0" y="0" transform="translate(30 144) rotate(-20) scale(.62 1)" font-family="Liberation Sans,sans-serif" font-size="52" fill="#141414" stroke="#141414" stroke-width="1.8" stroke-linejoin="round" text-anchor="middle">Н</text>
<text x="0" y="0" transform="translate(53 127) rotate(-15) scale(.62 1)" font-family="Liberation Sans,sans-serif" font-size="52" fill="#141414" stroke="#141414" stroke-width="1.8" stroke-linejoin="round" text-anchor="middle">А</text>
<text x="0" y="0" transform="translate(74 111) rotate(-9) scale(.62 1)" font-family="Liberation Sans,sans-serif" font-size="52" fill="#141414" stroke="#141414" stroke-width="1.8" stroke-linejoin="round" text-anchor="middle">Т</text>
<text x="0" y="0" transform="translate(94 103) rotate(-3) scale(.62 1)" font-family="Liberation Sans,sans-serif" font-size="50" fill="#141414" stroke="#141414" stroke-width="1.8" stroke-linejoin="round" text-anchor="middle">В</text>
<text x="0" y="0" transform="translate(114 97) rotate(2) scale(.62 1)" font-family="Liberation Sans,sans-serif" font-size="46" fill="#141414" stroke="#141414" stroke-width="1.8" stroke-linejoin="round" text-anchor="middle">О</text>
<text x="0" y="0" transform="translate(137 111) rotate(10) scale(.62 1)" font-family="Liberation Sans,sans-serif" font-size="52" fill="#141414" stroke="#141414" stroke-width="1.8" stroke-linejoin="round" text-anchor="middle">Р</text>
<text x="0" y="0" transform="translate(157 121) rotate(14) scale(.62 1)" font-family="Liberation Sans,sans-serif" font-size="50" fill="#141414" stroke="#141414" stroke-width="1.8" stroke-linejoin="round" text-anchor="middle">И</text>
<text x="0" y="0" transform="translate(177 131) rotate(16) scale(.62 1)" font-family="Liberation Sans,sans-serif" font-size="48" fill="#141414" stroke="#141414" stroke-width="1.8" stroke-linejoin="round" text-anchor="middle">Л</text>
<text x="0" y="0" transform="translate(199 141) rotate(18) scale(.62 1)" font-family="Liberation Sans,sans-serif" font-size="50" fill="#141414" stroke="#141414" stroke-width="1.8" stroke-linejoin="round" text-anchor="middle">А</text>
<path d="M26 146v18" stroke="#222" stroke-width="1.200"/>
<path d="M36 148v26" stroke="#222" stroke-width="1.200"/>
<path d="M52 150v30" stroke="#222" stroke-width="1.200"/>
<path d="M60 130v14" stroke="#222" stroke-width="1.200"/>
<path d="M150 124v12" stroke="#222" stroke-width="1.200"/>
<path d="M172 134v16" stroke="#222" stroke-width="1.200"/>
<path d="M196 144v10" stroke="#222" stroke-width="1.200"/>
<path d="M110 100v14" stroke="#222" stroke-width="1.200"/>
<path d="M14 12c-2.500 4.500-2.500 7.500 0 7.500s2.500-3 0-7.500z" fill="#1a1a1a"/>
<path d="M66 28c-2.500 4.500-2.500 7.500 0 7.500s2.500-3 0-7.500z" fill="#1a1a1a"/>
<path d="M181 8c-2.500 4.500-2.500 7.500 0 7.500s2.500-3 0-7.500z" fill="#1a1a1a"/>
<path d="M200 75c-2.500 4.500-2.500 7.500 0 7.500s2.500-3 0-7.500z" fill="#1a1a1a"/>
<path d="M109 104c-2.500 4.500-2.500 7.500 0 7.500s2.500-3 0-7.500z" fill="#1a1a1a"/>
<path d="M22 158c-2.500 4.500-2.500 7.500 0 7.500s2.500-3 0-7.500z" fill="#1a1a1a"/>
<path d="M67 160c-2.500 4.500-2.500 7.500 0 7.500s2.500-3 0-7.500z" fill="#1a1a1a"/>
<path d="M204 166c-2.500 4.500-2.500 7.500 0 7.500s2.500-3 0-7.500z" fill="#1a1a1a"/>
<path d="M58 148c-2.500 4.500-2.500 7.500 0 7.500s2.500-3 0-7.500z" fill="#1a1a1a"/>
<path d="M150 160c2-12 22-14 26-2 3 10-12 16-13 26 0 5 8 8 17 3" fill="none" stroke="#1b1b1b" stroke-width="10.500" stroke-linecap="round"/>
<path d="M150 160c2-12 22-14 26-2 3 10-12 16-13 26 0 5 8 8 17 3" fill="none" stroke="#c9281f" stroke-width="8" stroke-linecap="round"/>
<path d="M151 158c3-9 18-11 23-3" fill="none" stroke="#2a8f4a" stroke-width="4" stroke-linecap="round"/>
<path d="M174 168c-4 7-11 11-11 18" fill="none" stroke="#2a5fd0" stroke-width="3.500" stroke-linecap="round"/>
<path d="M165 178c-2 4-2 8 1 9" fill="none" stroke="#8fd6e8" stroke-width="2.200" stroke-linecap="round"/>
<circle cx="174" cy="203" r="6.500" fill="#8a2a1a" stroke="#1b1b1b" stroke-width="2"/><circle cx="174" cy="203" r="2.500" fill="#e86a3a"/>
<path d="M4 138v46c10-12 22-14 31-16" fill="none" stroke="#1f1f1f" stroke-width="10" stroke-linecap="round" stroke-linejoin="round"/>
<path d="M4 138v46c10-12 22-14 31-16" fill="none" stroke="#2f9a46" stroke-width="8" stroke-linecap="round" stroke-linejoin="round"/>
<path d="M4 140v42c10-11 21-13 30-15" fill="none" stroke="#e0d82a" stroke-width="4.500" stroke-linecap="round" stroke-linejoin="round"/>
<path d="M4 142v38c10-10 20-12 28-14" fill="none" stroke="#2a7fc0" stroke-width="2" stroke-linecap="round" stroke-linejoin="round"/>
<g transform="translate(24 213) rotate(-8)"><path d="M-18.0 -4.1L-15.8 -14.3L-13.5 -4.1z" fill="#ee5a1c" stroke="#222" stroke-width=".7"/><path d="M-13.5 -7.8L-11.2 -18.0L-9.0 -7.8z" fill="#ee5a1c" stroke="#222" stroke-width=".7"/><path d="M-9.0 -9.7L-6.8 -19.9L-4.5 -9.7z" fill="#ee5a1c" stroke="#222" stroke-width=".7"/><path d="M-4.5 -10.5L-2.2 -20.7L0.0 -10.5z" fill="#ee5a1c" stroke="#222" stroke-width=".7"/><path d="M0.0 -10.5L2.2 -20.7L4.5 -10.5z" fill="#ee5a1c" stroke="#222" stroke-width=".7"/><path d="M4.5 -9.7L6.8 -19.9L9.0 -9.7z" fill="#ee5a1c" stroke="#222" stroke-width=".7"/><path d="M9.0 -7.8L11.2 -18.0L13.5 -7.8z" fill="#ee5a1c" stroke="#222" stroke-width=".7"/><path d="M13.5 -4.1L15.8 -14.3L18.0 -4.1z" fill="#ee5a1c" stroke="#222" stroke-width=".7"/><path d="M-19 0Q0 -25.2 19 0Q0 22.8 -19 0z" fill="#3a2a9a" stroke="#1a1a1a" stroke-width="1.200"/><path d="M-17 -1Q0 -22.8 17 -1" fill="none" stroke="#2b6ad0" stroke-width="2.200"/><path d="M-16 -.5Q0 -19.2 16 -.5" fill="none" stroke="#2fa04a" stroke-width="1.800"/><path d="M-15 0Q0 -16.2 15 0" fill="none" stroke="#e8d82a" stroke-width="1.500"/><path d="M-17 1Q0 19.8 17 1" fill="none" stroke="#c0208a" stroke-width="2.200"/><path d="M-14 0Q0 -13.8 14 0Q0 13.8 -14 0z" fill="#ececf4" stroke="#222" stroke-width=".8"/><circle cx="0" cy="0" r="6.7" fill="#e0301c" stroke="#7a1410" stroke-width="1"/><circle cx="0" cy="0" r="2.4" fill="#111"/></g>
<g transform="translate(178 242) rotate(4)"><path d="M-24.0 -5.9L-21.0 -18.2L-18.0 -5.9z" fill="#ee5a1c" stroke="#222" stroke-width=".7"/><path d="M-18.0 -10.7L-15.0 -23.0L-12.0 -10.7z" fill="#ee5a1c" stroke="#222" stroke-width=".7"/><path d="M-12.0 -13.1L-9.0 -25.4L-6.0 -13.1z" fill="#ee5a1c" stroke="#222" stroke-width=".7"/><path d="M-6.0 -14.1L-3.0 -26.4L0.0 -14.1z" fill="#ee5a1c" stroke="#222" stroke-width=".7"/><path d="M0.0 -14.1L3.0 -26.4L6.0 -14.1z" fill="#ee5a1c" stroke="#222" stroke-width=".7"/><path d="M6.0 -13.1L9.0 -25.4L12.0 -13.1z" fill="#ee5a1c" stroke="#222" stroke-width=".7"/><path d="M12.0 -10.7L15.0 -23.0L18.0 -10.7z" fill="#ee5a1c" stroke="#222" stroke-width=".7"/><path d="M18.0 -5.9L21.0 -18.2L24.0 -5.9z" fill="#ee5a1c" stroke="#222" stroke-width=".7"/><path d="M-25 0Q0 -32.6 25 0Q0 29.4 -25 0z" fill="#3a2a9a" stroke="#1a1a1a" stroke-width="1.200"/><path d="M-23 -1Q0 -29.4 23 -1" fill="none" stroke="#2b6ad0" stroke-width="2.200"/><path d="M-22 -.5Q0 -24.8 22 -.5" fill="none" stroke="#2fa04a" stroke-width="1.800"/><path d="M-21 0Q0 -20.9 21 0" fill="none" stroke="#e8d82a" stroke-width="1.500"/><path d="M-23 1Q0 25.6 23 1" fill="none" stroke="#c0208a" stroke-width="2.200"/><path d="M-20 0Q0 -17.8 20 0Q0 17.8 -20 0z" fill="#ececf4" stroke="#222" stroke-width=".8"/><circle cx="0" cy="0" r="8.7" fill="#e0301c" stroke="#7a1410" stroke-width="1"/><circle cx="0" cy="0" r="3.1" fill="#111"/></g>
<path d="M214 186c-10 4-17 10-19 16 6 4 10 8 12 14 1 8 4 14 7 18z" fill="#d8283a" stroke="#1f1f1f" stroke-width="1.500"/>
<path d="M214 190c-8 4-13 8-15 12 5 3 9 8 10 14 1 6 3 10 5 13" fill="none" stroke="#e8d82a" stroke-width="2.200"/>
<path d="M214 195c-5 3-9 5-10 8 4 3 6 7 7 12 1 4 2 7 3 9" fill="none" stroke="#2fa04a" stroke-width="2.200"/>
<path d="M214 200c-3 1-5 3-5 4 2 2 3 5 4 9" fill="none" stroke="#2b4ad0" stroke-width="2"/>
<path d="M36 300c-4-8-12-8-13-14 8-2 14-8 16-16 0-10 4-18 10-18 6 1 6 10 7 18 0 8 8 10 10 18 0 6-2 9-3 12z" fill="#e6dc2a" stroke="#1f1f1f" stroke-width="1.300"/>
<path d="M36 300c-4-8-12-8-13-14 8-2 14-8 16-16 0-10 4-18 10-18 6 1 6 10 7 18 0 8 8 10 10 18 0 6-2 9-3 12z" transform="translate(6.800 44) scale(.85)" fill="#3aa84a"/>
<path d="M36 300c-4-8-12-8-13-14 8-2 14-8 16-16 0-10 4-18 10-18 6 1 6 10 7 18 0 8 8 10 10 18 0 6-2 9-3 12z" transform="translate(13.700 88) scale(.7)" fill="#b070d0"/>
<path d="M36 300c-4-8-12-8-13-14 8-2 14-8 16-16 0-10 4-18 10-18 6 1 6 10 7 18 0 8 8 10 10 18 0 6-2 9-3 12z" transform="translate(20.500 132) scale(.55)" fill="#d8283a"/>
<path d="M36 300c-4-8-12-8-13-14 8-2 14-8 16-16 0-10 4-18 10-18 6 1 6 10 7 18 0 8 8 10 10 18 0 6-2 9-3 12z" transform="translate(27.400 176) scale(.4)" fill="#2b4ad0"/>
<path d="M36 300c-4-8-12-8-13-14 8-2 14-8 16-16 0-10 4-18 10-18 6 1 6 10 7 18 0 8 8 10 10 18 0 6-2 9-3 12z" transform="translate(34 220) scale(.25)" fill="#111"/>
<path d="M166 301c4-10 12-18 22-20 8 0 12 4 16 2 4-1 7 0 10 2v16z" fill="#2b3ad0" stroke="#1f1f1f" stroke-width="1.300"/>
<path d="M171 301c4-8 10-14 18-15 7 0 11 4 15 2 4-1 7 1 10 3v10z" fill="#d8286a"/>
<path d="M177 301c3-6 8-10 14-10 6 0 10 4 14 3 3-1 6 0 9 2v5z" fill="#3aa84a"/>
<path d="M184 301c3-4 6-6 10-6 5 0 9 3 12 3 3 0 5 0 8 1v2z" fill="#e6dc2a"/>
<path d="M88 186c-10 4-16 10-17 18v44c0 8 4 12 8 16-5 10-8 22-7 37h72c-4-10-8-20-8-30 0-8 10-14 12-24 2-16 1-36-2-46-4-10-14-16-26-18z" fill="#fafafa" stroke="#1b1b3a" stroke-width="1.800"/>
<path d="M88 186c-10 4-16 10-17 18v44c0 8 4 12 8 16-5 10-8 22-7 37h72c-4-10-8-20-8-30 0-8 10-14 12-24 2-16 1-36-2-46-4-10-14-16-26-18z" fill="url(#dots)"/>
<path d="M86 189c-8 4-12 9-13 16v42c0 8 4 12 8 16-5 10-7 22-7 37" fill="none" stroke="#b9a6e0" stroke-width="3.200"/>
<path d="M83 196c-4 4-5 8-5 14v36c1 8 5 12 9 16-5 10-7 22-7 38" fill="none" stroke="#a6e2ec" stroke-width="5"/>
<path d="M132 192c8 4 12 9 14 16 2 12 3 30 1 42-2 10-11 16-12 24 0 10 3 18 7 27" fill="none" stroke="#b9a6e0" stroke-width="3.200"/>
<path d="M136 200c4 4 6 8 6 14 1 12 2 24 0 34-2 10-11 16-12 26 0 10 3 18 6 27" fill="none" stroke="#a6e2ec" stroke-width="5"/>
<path d="M96 200c-3 12-3 30 0 44M126 204c3 12 3 26 0 40" fill="none" stroke="#b9a6e0" stroke-width="2.200"/>
<path d="M92 204c-2 12-2 26 0 38M130 208c2 10 2 22 0 32" fill="none" stroke="#a6e2ec" stroke-width="3"/>
<path d="M88 210L90 222" stroke="#ef6a3a" stroke-width="3.400" stroke-linecap="round"/>
<path d="M103 206L101 224" stroke="#ef6a3a" stroke-width="3.400" stroke-linecap="round"/>
<path d="M108 220L106 238" stroke="#ef6a3a" stroke-width="3.400" stroke-linecap="round"/>
<path d="M121 204L124 216" stroke="#ef6a3a" stroke-width="3.400" stroke-linecap="round"/>
<path d="M112 238L108 250" stroke="#ef6a3a" stroke-width="3.400" stroke-linecap="round"/>
<path d="M124 246L120 262" stroke="#ef6a3a" stroke-width="3.400" stroke-linecap="round"/>
<path d="M100 252L94 262" stroke="#ef6a3a" stroke-width="3.400" stroke-linecap="round"/>
<path d="M90 258L86 268" stroke="#ef6a3a" stroke-width="3.400" stroke-linecap="round"/>
<path d="M116 268L118 284" stroke="#ef6a3a" stroke-width="3.400" stroke-linecap="round"/>
<path d="M96 284L98 298" stroke="#ef6a3a" stroke-width="3.400" stroke-linecap="round"/>
<path d="M105 284L107 296" stroke="#ef6a3a" stroke-width="3.400" stroke-linecap="round"/>
<path d="M129 206L132 214" stroke="#ef6a3a" stroke-width="3.400" stroke-linecap="round"/>
<path d="M84 192L88 200" stroke="#ef6a3a" stroke-width="3.400" stroke-linecap="round"/>
<polygon points="124.9,226.4 119.8,227.3 119.7,232.5 116.4,228.5 111.9,231.1 113.6,226.2 109.1,223.6 114.2,222.7 114.3,217.5 117.6,221.5 122.1,218.9 120.4,223.8" fill="#e0284a" stroke="#a0182a" stroke-width=".6"/>
<polygon points="89.0,242.0 84.7,243.6 85.5,248.1 82.0,245.2 78.5,248.1 79.3,243.6 75.0,242.0 79.3,240.4 78.5,235.9 82.0,238.8 85.5,235.9 84.7,240.4" fill="#e0382a" stroke="#a0182a" stroke-width=".6"/>
<polygon points="99.5,278.7 94.3,278.8 93.4,283.9 90.8,279.4 85.9,281.1 88.5,276.6 84.5,273.3 89.7,273.2 90.6,268.1 93.2,272.6 98.1,270.9 95.5,275.4" fill="#e0284a" stroke="#a0182a" stroke-width=".6"/>
<polygon points="134.0,296.0 129.1,297.8 130.0,302.9 126.0,299.6 122.0,302.9 122.9,297.8 118.0,296.0 122.9,294.2 122.0,289.1 126.0,292.4 130.0,289.1 129.1,294.2" fill="#e0284a" stroke="#a0182a" stroke-width=".6"/>
<polygon points="140.0,240.0 137.6,240.9 138.0,243.5 136.0,241.8 134.0,243.5 134.4,240.9 132.0,240.0 134.4,239.1 134.0,236.5 136.0,238.2 138.0,236.5 137.6,239.1" fill="#e0382a" stroke="#a0182a" stroke-width=".6"/>
<path d="M88 148c-4-18 6-30 22-30s26 12 22 30c-2 10-6 16-8 24-2 8-4 12-4 18l-8 10-9-10c0-8-3-14-6-20-4-8-8-14-9-22z" fill="#f7dd16" stroke="#1b1b1b" stroke-width="1.600" stroke-linejoin="round"/>
<path d="M86 140c-6-4-12 0-11 8 1 12 8 22 12 32 2 8 4 14 6 20 4 4 8 2 8-4-1-10-3-18-6-26-3-10-4-22-9-30z" fill="#f7dd16" stroke="#1b1b1b" stroke-width="1.600" stroke-linejoin="round"/>
<path d="M133 140c6-4 11 0 10 8-1 12-6 20-9 30-2 8-2 12-4 18-3 4-7 2-7-3 0-10 2-16 4-24 2-10 2-22 6-29z" fill="#f7dd16" stroke="#1b1b1b" stroke-width="1.600" stroke-linejoin="round"/>
<path d="M91 150c2 10 6 20 9 30M129 150c-2 10-4 18-7 28" fill="none" stroke="#1b1b1b" stroke-width="1"/>
<circle cx="100" cy="148" r="3.600" fill="#dfe8f0" stroke="#1b1b1b" stroke-width="1"/><circle cx="100" cy="148" r="1.200" fill="#111"/>
<circle cx="117" cy="148" r="3.600" fill="#dfe8f0" stroke="#1b1b1b" stroke-width="1"/><circle cx="117" cy="148" r="1.200" fill="#111"/>
<circle cx="106" cy="159" r=".9" fill="#111"/><circle cx="110" cy="159" r=".9" fill="#111"/>
<ellipse cx="108" cy="172" rx="4" ry="7.500" fill="#8fc8e6" stroke="#1b1b1b" stroke-width="1.600"/>
<path d="M103 188c3 2 8 2 11 0" fill="none" stroke="#1b1b1b" stroke-width=".9"/>
<polygon points="91.0,130.0 86.1,131.8 87.0,136.9 83.0,133.6 79.0,136.9 79.9,131.8 75.0,130.0 79.9,128.2 79.0,123.1 83.0,126.4 87.0,123.1 86.1,128.2" fill="#d8203a" stroke="#a0182a" stroke-width=".6"/>
<circle cx="83" cy="130" r="1.300" fill="#5a0a14"/>
<polygon points="97.7,123.1 92.5,123.5 92.1,128.7 89.1,124.5 84.3,126.7 86.5,121.9 82.3,118.9 87.5,118.5 87.9,113.3 90.9,117.5 95.7,115.3 93.5,120.1" fill="#d8203a" stroke="#a0182a" stroke-width=".6"/>
<circle cx="90" cy="121" r="1.300" fill="#5a0a14"/>
<polygon points="108.0,116.7 102.9,118.1 103.4,123.3 99.7,119.6 95.4,122.6 96.7,117.5 92.0,115.3 97.1,113.9 96.6,108.7 100.3,112.4 104.6,109.4 103.3,114.5" fill="#d8203a" stroke="#a0182a" stroke-width=".6"/>
<circle cx="100" cy="116" r="1.300" fill="#5a0a14"/>
<polygon points="118.5,116.7 113.3,116.8 112.4,121.9 109.8,117.4 104.9,119.1 107.5,114.6 103.5,111.3 108.7,111.2 109.6,106.1 112.2,110.6 117.1,108.9 114.5,113.4" fill="#d8203a" stroke="#a0182a" stroke-width=".6"/>
<circle cx="111" cy="114" r="1.300" fill="#5a0a14"/>
<polygon points="130.0,117.0 125.1,118.8 126.0,123.9 122.0,120.6 118.0,123.9 118.9,118.8 114.0,117.0 118.9,115.2 118.0,110.1 122.0,113.4 126.0,110.1 125.1,115.2" fill="#d8203a" stroke="#a0182a" stroke-width=".6"/>
<circle cx="122" cy="117" r="1.300" fill="#5a0a14"/>
<polygon points="138.9,125.4 133.8,126.3 133.7,131.5 130.4,127.5 125.9,130.1 127.6,125.2 123.1,122.6 128.2,121.7 128.3,116.5 131.6,120.5 136.1,117.9 134.4,122.8" fill="#d8203a" stroke="#a0182a" stroke-width=".6"/>
<circle cx="131" cy="124" r="1.300" fill="#5a0a14"/>
<polygon points="142.3,135.0 137.8,134.6 136.6,139.0 134.7,134.9 130.3,136.0 132.9,132.3 129.7,129.0 134.2,129.4 135.4,125.0 137.3,129.1 141.7,128.0 139.1,131.7" fill="#d8203a" stroke="#a0182a" stroke-width=".6"/>
<circle cx="136" cy="132" r="1.300" fill="#5a0a14"/>
<path d="M50 150v58M207 232v50" stroke="#222" stroke-width="1.300"/>
</svg></div></div>
<div id="stb" class="abs" style="left:107px;top:641px;width:732px;height:39px;background:#f2f4f9"><svg class="abs" style="left:289px;top:11px" width="12" height="18" viewBox="0 0 12 18"><path d="M9.500 1.500L2.500 9l7 7.500" fill="none" stroke="#4b5563" stroke-width="1.400"/></svg>
<div class="abs" style="left:321px;top:10px;font-size:15.500px;color:#1f2933;letter-spacing:-0.3px;white-space:nowrap">Слайд 6</div>
<svg class="abs" style="left:396px;top:16px" width="11" height="8" viewBox="0 0 11 8"><path d="M1.500 1.500l4 4 4-4" fill="none" stroke="#111" stroke-width="2"/></svg>
<svg class="abs" style="left:424px;top:11px" width="12" height="18" viewBox="0 0 12 18"><path d="M2.500 1.500l7 7.500-7 7.500" fill="none" stroke="#4b5563" stroke-width="1.400"/></svg>
<svg class="abs" style="left:556px;top:11px" width="19" height="19" viewBox="0 0 19 19"><circle cx="9.500" cy="9.500" r="8" fill="none" stroke="#a3aab4" stroke-width="1.300"/><path d="M5.500 9.500h8" stroke="#a3aab4" stroke-width="1.300"/></svg>
<div class="abs" style="left:597px;top:13px;font-size:11.500px;color:#9aa3ad;white-space:nowrap;letter-spacing:-0.2px">100 %</div>
<svg class="abs" style="left:650px;top:11px" width="19" height="19" viewBox="0 0 19 19"><circle cx="9.500" cy="9.500" r="8" fill="none" stroke="#55606c" stroke-width="1.300"/><path d="M5.500 9.500h8M9.500 5.500v8" stroke="#55606c" stroke-width="1.300"/></svg>
<svg class="abs" style="left:691px;top:15px" width="19" height="10" viewBox="0 0 19 10"><path d="M1.500 5h16M4.500 2L1.500 5l3 3M14.500 2l3 3-3 3" fill="none" stroke="#55606c" stroke-width="1.200"/></svg></div>
<div class="abs" style="left:797px;top:94px;width:40px;height:26px;border-radius:3px;background:#f6f7fb"><svg class="abs" style="left:14px;top:7px" width="12" height="12" viewBox="0 0 12 12"><path d="M1 1l3.500 3.500M11 1L7.500 4.500M1 11l3.500-3.500M11 11L7.500 7.500" stroke="#6b7280" stroke-width="1.100"/><path d="M1 3.500V1h2.500M8.500 1H11v2.500M1 8.500V11h2.500M8.500 11H11V8.500" stroke="#6b7280" stroke-width="1.100" fill="none"/></svg></div>
<div id="lstrip" class="abs" style="left:107px;top:92px;width:1.200px;height:588px;background:#0b1f37"></div>
<div id="wb" class="abs" style="left:889px;top:272px;width:45.500px;height:228px;border-radius:7px;background:#fdfdfe;overflow:hidden"><div class="abs" style="left:0;top:45.5px;width:46px;height:1px;background:#dfe3ea"></div>
<div class="abs" style="left:0;top:90.5px;width:46px;height:1px;background:#dfe3ea"></div>
<div class="abs" style="left:0;top:135.5px;width:46px;height:1px;background:#dfe3ea"></div>
<div class="abs" style="left:0;top:180.5px;width:46px;height:1px;background:#dfe3ea"></div>
<svg class="abs" style="left:11px;top:10px" width="25.500" height="26" viewBox="-2 0 21 23.500" preserveAspectRatio="none"><path d="M4.500 11.500V4.200a1.400 1.400 0 0 1 2.800 0V9.500 2.600a1.400 1.400 0 0 1 2.800 0V9.500 3.400a1.400 1.400 0 0 1 2.800 0V10 5.600a1.400 1.400 0 0 1 2.800 0V14c0 5-2.500 8-6.500 8-3.500 0-5-1.500-6.800-4.500L.8 14.500c-.7-1.300.9-2.400 2-1.300l1.700 1.900z" fill="none" stroke="#4b5563" stroke-width="1.400" stroke-linejoin="round"/></svg>
<svg class="abs" style="left:2px;top:35px" width="10" height="9" viewBox="0 0 10 9"><path d="M0 0v9h10z" fill="#4b5563"/></svg>
<svg class="abs" style="left:11px;top:55px" width="25" height="28" viewBox="0 0 25 28"><path d="M3 7.500h10a9 9 0 0 1 0 18.500h-2.500" fill="none" stroke="#4b5563" stroke-width="1.500"/><path d="M8 2.500L3 7.500l5 5" fill="none" stroke="#4b5563" stroke-width="1.500"/></svg>
<svg class="abs" style="left:10px;top:99px" width="25" height="29" viewBox="0 0 25 29"><path d="M1 6h23M8.500 6V2.500h8V6M3.500 6l1.800 21h14.400l1.800-21" fill="none" stroke="#4b5563" stroke-width="1.500" stroke-linejoin="round"/><path d="M9 10v13M12.500 10v13M16 10v13" stroke="#4b5563" stroke-width="1.400"/></svg>
<svg class="abs" style="left:9px;top:143px" width="28" height="30" viewBox="0 0 28 30"><path d="M9.500 9.500c3-4.500 6-5.500 8.500-4.500s4.500.5 8-2" fill="none" stroke="#4b5563" stroke-width="1.300" stroke-linecap="round"/><path d="M6.500 21v-9a1.300 1.300 0 0 1 2.600 0v6-2.500a1.300 1.300 0 0 1 2.600 0V18v-2a1.300 1.300 0 0 1 2.600 0v2.500-1.500a1.300 1.300 0 0 1 2.600 0V22c0 4-2 6.500-5.500 6.500-3 0-4.500-1.200-6-3.800L3 21.500c-.6-1.200.8-2.100 1.800-1.100z" fill="none" stroke="#4b5563" stroke-width="1.300" stroke-linejoin="round"/></svg>
<svg class="abs" style="left:9px;top:193px" width="28" height="23" viewBox="0 0 28 23"><rect x="1" y="1" width="26" height="21" rx="1.500" fill="none" stroke="#4b5563" stroke-width="1.600"/><path d="M5 16l5-4.500 3.500 1.500 4.500-4 5-1.500" fill="none" stroke="#4b5563" stroke-width="1.500" stroke-linejoin="round" stroke-linecap="round"/></svg></div>
<div class="abs" style="left:22px;top:691px;width:46px;height:46px;border-radius:50%;background:#1a73e0"><svg class="abs" style="left:13px;top:13px" width="20" height="20" viewBox="0 0 20 20"><path d="M10 1v18M1 10h18" stroke="#fff" stroke-width="2"/></svg></div>
<div class="abs" style="left:314px;top:691px;width:46px;height:46px;border-radius:50%;border:3px solid #fff"><svg class="abs" style="left:9px;top:8px" width="22" height="24" viewBox="0 0 22 24"><rect x="7.500" y="1.500" width="7" height="12.500" rx="3.500" fill="none" stroke="#fff" stroke-width="1.600"/><path d="M4 10.500a7 7 0 0 0 14 0M11 17.500v4M6 22h10" fill="none" stroke="#fff" stroke-width="1.600"/><path d="M3 20L19 2" stroke="#fff" stroke-width="1.600"/></svg></div>
<div class="abs" style="left:382px;top:691px;width:46px;height:46px;border-radius:50%;background:#1a73e0"><svg class="abs" style="left:12px;top:12px" width="24" height="22" viewBox="0 0 24 22"><path d="M2 7.500h4.500L12.500 2v18l-6-5.500H2z" fill="none" stroke="#fff" stroke-width="1.700" stroke-linejoin="round"/><path d="M15.500 7a5.500 5.500 0 0 1 0 8M18.500 4.500a9.500 9.500 0 0 1 0 13" fill="none" stroke="#fff" stroke-width="1.700"/></svg></div>
<div class="abs" style="left:415px;top:722px;width:17px;height:17px;border-radius:50%;background:#fff;border:1px solid #0b1f37"><svg class="abs" style="left:3px;top:5px" width="9" height="6" viewBox="0 0 9 6"><path d="M1 1l3.500 3.500L8 1" fill="none" stroke="#6b7280" stroke-width="1.300"/></svg></div>
<div class="abs" style="left:450px;top:691px;width:46px;height:46px;border-radius:50%;border:3px solid #fff"><svg class="abs" style="left:8px;top:10px" width="25" height="20" viewBox="0 0 25 20"><rect x="2" y="3.500" width="14" height="13" rx="1" fill="none" stroke="#fff" stroke-width="1.700"/><path d="M16 8.500l6-3.500v10l-6-3.500z" fill="none" stroke="#fff" stroke-width="1.700" stroke-linejoin="round"/><path d="M3 18.500L19 1" stroke="#fff" stroke-width="1.600"/></svg></div>
<div class="abs" style="left:518px;top:691px;width:46px;height:46px;border-radius:50%;border:3px solid #fff"><svg class="abs" style="left:8px;top:9px" width="25" height="23" viewBox="0 0 25 23"><rect x="3" y="2.500" width="18" height="13" fill="none" stroke="#fff" stroke-width="1.700"/><path d="M8 20h9M10 17.500l-1 2.500M15 17.500l1 2.500" stroke="#fff" stroke-width="1.500"/><path d="M3 18.500L21 1" stroke="#fff" stroke-width="1.600"/></svg></div>
<div class="abs" style="left:809px;top:691px;width:46px;height:46px;border-radius:50%;background:#1a73e0"><svg class="abs" style="left:11px;top:12px" width="24" height="23" viewBox="0 0 24 23"><path d="M1 2h22" stroke="#fff" stroke-width="1.800"/><rect x="3" y="2" width="18" height="12" fill="none" stroke="#fff" stroke-width="1.700"/><path d="M12 14v4M7.500 21.500l4.500-4 4.500 4" fill="none" stroke="#fff" stroke-width="1.700"/></svg></div>
<div class="abs" style="left:877.5px;top:692px;width:46px;height:46px;border-radius:50%;border:3px solid #fff"><svg class="abs" style="left:10px;top:9px" width="19" height="21" viewBox="-2 0 21 23.500"><path d="M4.500 11.500V4.200a1.400 1.400 0 0 1 2.800 0V9.500 2.600a1.400 1.400 0 0 1 2.800 0V9.500 3.400a1.400 1.400 0 0 1 2.800 0V10 5.600a1.400 1.400 0 0 1 2.800 0V14c0 5-2.500 8-6.500 8-3.500 0-5-1.500-6.800-4.500L.8 14.500c-.7-1.300.9-2.400 2-1.300l1.700 1.900z" fill="none" stroke="#fff" stroke-width="2" stroke-linejoin="round"/></svg></div>
</div>
</div>
<div id="bottomline"></div>
</body>
</html>
